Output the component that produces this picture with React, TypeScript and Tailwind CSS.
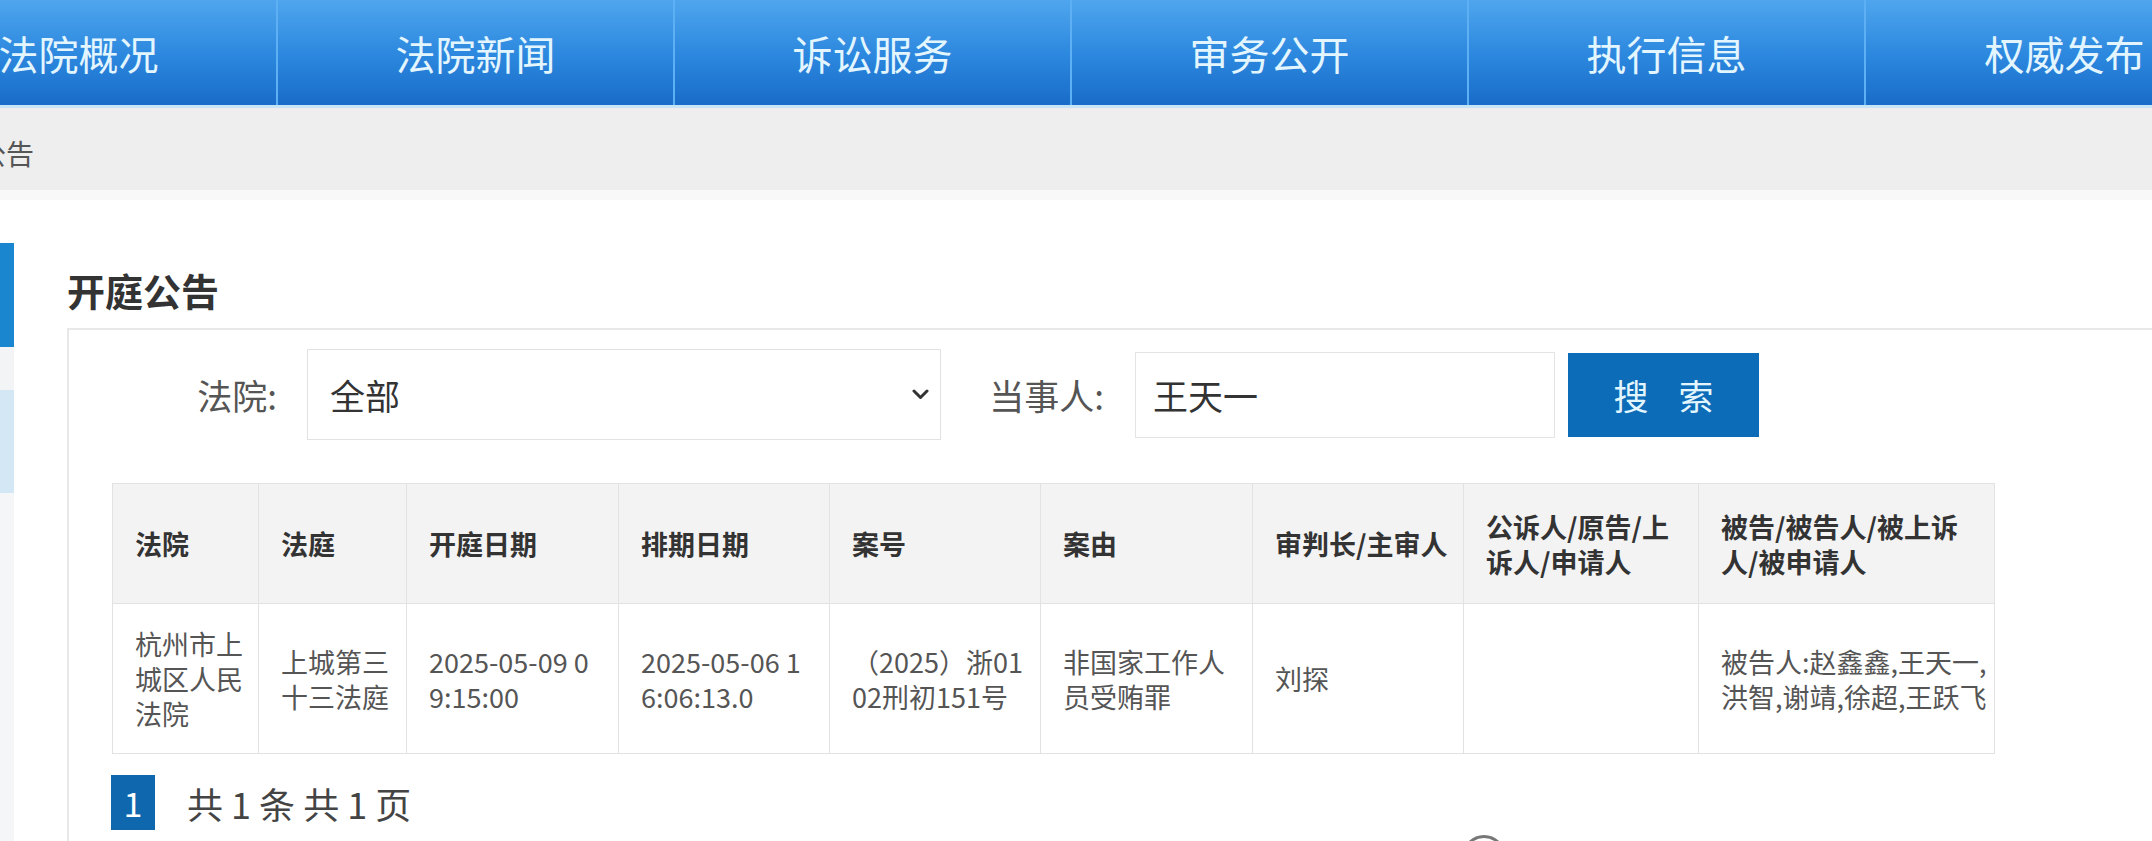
import React from "react";

const navItems = ["法院概况", "法院新闻", "诉讼服务", "审务公开", "执行信息", "权威发布"];

function Chevron() {
  return (
    <svg width="17" height="11" viewBox="0 0 17 11" fill="none">
      <polyline points="2,2 8.5,8.5 15,2" stroke="#333" strokeWidth="3" strokeLinecap="round" strokeLinejoin="round" />
    </svg>
  );
}

export default function App() {
  return (
    <div className="relative w-[2152px] h-[841px] overflow-hidden bg-white flex flex-col [font-family:'Noto_Sans_CJK_SC','Microsoft_YaHei',sans-serif]">
      {/* top navigation */}
      <nav className="h-[108px] shrink-0 flex bg-linear-to-b from-[#4fa6ee] via-[#2d89df] to-[#196cc9] border-b-[3px] border-[#c8e5f7]">
        <div className="flex ml-[-119px]">
          {navItems.map((t, i) => (
            <div
              key={t}
              className={
                i < navItems.length - 1
                  ? "w-[397px] shrink-0 flex items-center justify-center border-r-2 border-[#5cb0f3] text-[40px] text-[#e3f6ff] leading-none"
                  : "w-[397px] shrink-0 flex items-center justify-center text-[40px] text-[#e3f6ff] leading-none"
              }
            >
              {t}
            </div>
          ))}
        </div>
      </nav>

      {/* breadcrumb */}
      <div className="h-[82px] shrink-0 bg-[#eeeeee] flex items-center pt-[8px] text-[28px] text-[#555]">
        <span className="ml-[-22px]">公告</span>
      </div>
      <div className="h-[10px] shrink-0 bg-[#f8f8f8]" />

      {/* main */}
      <div className="flex flex-1 min-h-0">
        {/* sidebar edge */}
        <div className="w-[14px] shrink-0 flex flex-col pt-[43px]">
          <div className="h-[104px] bg-[#1a86cf]" />
          <div className="h-[43px] bg-[#f3f4f5]" />
          <div className="h-[103px] bg-[#d4e7f4]" />
          <div className="flex-1 bg-[#f4f6f8]" />
        </div>

        {/* content */}
        <div className="ml-[53px] flex-1 flex flex-col">
          <div className="h-[128px] shrink-0 pt-[66px] text-[38px] font-bold text-[#333] leading-[48px]">开庭公告</div>

          <div className="flex-1 border-t-2 border-l-2 border-[#e8e8e8] mr-[-4px]">
            {/* search form */}
            <div className="mt-[19px] flex items-center h-[91px]">
              <div className="w-[238px] pr-[30px] text-right text-[35px] text-[#555] leading-none">法院:</div>
              <div className="w-[634px] h-[91px] border border-[#e2e2e2] flex items-center justify-between pl-[22px] pr-[11px]">
                <span className="text-[35px] text-[#333] leading-none">全部</span>
                <Chevron />
              </div>
              <div className="w-[194px] pr-[31px] text-right text-[35px] text-[#555] leading-none">当事人:</div>
              <div className="w-[420px] h-[86px] border border-[#e4e4e4] pl-[17px] flex items-center text-[35px] text-[#333] leading-none">
                王天一
              </div>
              <div className="ml-[13px] w-[191px] h-[84px] bg-[#0c6cb7] flex items-center justify-center gap-[30px] text-[35px] text-[#e3f6ff] leading-none">
                <span>搜</span>
                <span>索</span>
              </div>
            </div>

            {/* table */}
            <table className="mt-[43px] ml-[43px] table-fixed border-collapse w-[1882px] text-[27px] leading-[35px]">
              <colgroup>
                <col className="w-[146px]" />
                <col className="w-[148px]" />
                <col className="w-[212px]" />
                <col className="w-[211px]" />
                <col className="w-[211px]" />
                <col className="w-[212px]" />
                <col className="w-[211px]" />
                <col className="w-[235px]" />
                <col className="w-[296px]" />
              </colgroup>
              <thead>
                <tr className="h-[120px] bg-[#f3f3f3] text-[#333] font-bold">
                  <th className="border border-[#e2e2e2] pl-[22px] text-left align-middle font-bold whitespace-nowrap">法院</th>
                  <th className="border border-[#e2e2e2] pl-[22px] text-left align-middle font-bold whitespace-nowrap">法庭</th>
                  <th className="border border-[#e2e2e2] pl-[22px] text-left align-middle font-bold whitespace-nowrap">开庭日期</th>
                  <th className="border border-[#e2e2e2] pl-[22px] text-left align-middle font-bold whitespace-nowrap">排期日期</th>
                  <th className="border border-[#e2e2e2] pl-[22px] text-left align-middle font-bold whitespace-nowrap">案号</th>
                  <th className="border border-[#e2e2e2] pl-[22px] text-left align-middle font-bold whitespace-nowrap">案由</th>
                  <th className="border border-[#e2e2e2] pl-[22px] text-left align-middle font-bold whitespace-nowrap">审判长/主审人</th>
                  <th className="border border-[#e2e2e2] pl-[22px] text-left align-middle font-bold whitespace-nowrap">
                    公诉人/原告/上
                    <br />
                    诉人/申请人
                  </th>
                  <th className="border border-[#e2e2e2] pl-[22px] text-left align-middle font-bold whitespace-nowrap">
                    被告/被告人/被上诉
                    <br />
                    人/被申请人
                  </th>
                </tr>
              </thead>
              <tbody>
                <tr className="h-[150px] bg-white text-[#555]">
                  <td className="border border-[#e2e2e2] pl-[22px] align-middle whitespace-nowrap">
                    杭州市上
                    <br />
                    城区人民
                    <br />
                    法院
                  </td>
                  <td className="border border-[#e2e2e2] pl-[22px] align-middle whitespace-nowrap">
                    上城第三
                    <br />
                    十三法庭
                  </td>
                  <td className="border border-[#e2e2e2] pl-[22px] align-middle whitespace-nowrap">
                    2025-05-09 0
                    <br />
                    9:15:00
                  </td>
                  <td className="border border-[#e2e2e2] pl-[22px] align-middle whitespace-nowrap">
                    2025-05-06 1
                    <br />
                    6:06:13.0
                  </td>
                  <td className="border border-[#e2e2e2] pl-[22px] align-middle whitespace-nowrap">
                    （2025）浙01
                    <br />
                    02刑初151号
                  </td>
                  <td className="border border-[#e2e2e2] pl-[22px] align-middle whitespace-nowrap">
                    非国家工作人
                    <br />
                    员受贿罪
                  </td>
                  <td className="border border-[#e2e2e2] pl-[22px] align-middle whitespace-nowrap">刘探</td>
                  <td className="border border-[#e2e2e2] pl-[22px] align-middle whitespace-nowrap"></td>
                  <td className="border border-[#e2e2e2] pl-[22px] align-middle whitespace-nowrap">
                    被告人:赵鑫鑫,王天一,
                    <br />
                    洪智,谢靖,徐超,王跃飞
                  </td>
                </tr>
              </tbody>
            </table>

            {/* pagination */}
            <div className="mt-[21px] ml-[42px] flex items-center">
              <div className="w-[44px] h-[55px] bg-[#0f67ae] text-white text-[34px] leading-none flex items-center justify-center">1</div>
              <div className="ml-[32px] text-[36px] text-[#444] leading-none">共 1 条 共 1 页</div>
            </div>
          </div>
        </div>
      </div>

      {/* floating button peeking at bottom */}
      <div className="absolute left-[1462px] top-[835px] w-[44px] h-[44px] rounded-full border-[3px] border-[#777] bg-white" />
    </div>
  );
}
